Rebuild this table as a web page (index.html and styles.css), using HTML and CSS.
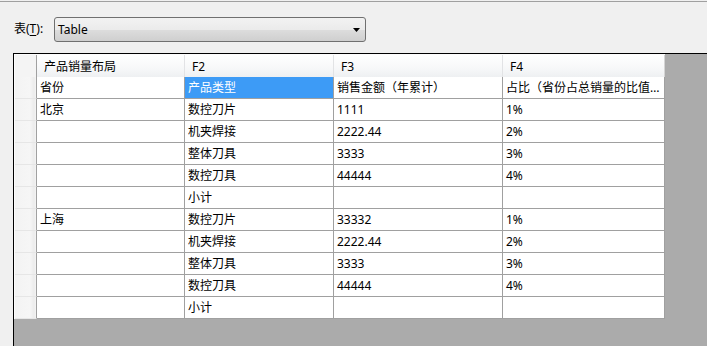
FILE: index.html
```html
<!DOCTYPE html>
<html lang="zh-CN">
<head>
<meta charset="utf-8">
<title>表</title>
<link rel="stylesheet" href="styles.css">
</head>
<body>
<div class="window">
  <div class="toolbar">
    <label class="field-label">表(<u>T</u>):</label>
    <div class="combo">
      <span class="combo-text">Table</span>
      <svg class="combo-arrow" width="7" height="4" viewBox="0 0 7 4"><polygon points="0,0 7,0 3.5,4" fill="#000"/></svg>
    </div>
  </div>
  <div class="frame">
    <div class="grid">
      <div class="corner"></div>
      <div class="col-head">产品销量布局</div>
      <div class="col-head">F2</div>
      <div class="col-head">F3</div>
      <div class="col-head last">F4</div>

      <div class="row-head"></div>
      <div class="cell">省份</div>
      <div class="cell selected">产品类型</div>
      <div class="cell">销售金额（年累计）</div>
      <div class="cell">占比（省份占总销量的比值…</div>

      <div class="row-head"></div>
      <div class="cell">北京</div>
      <div class="cell">数控刀片</div>
      <div class="cell">1111</div>
      <div class="cell">1%</div>

      <div class="row-head"></div>
      <div class="cell"></div>
      <div class="cell">机夹焊接</div>
      <div class="cell">2222.44</div>
      <div class="cell">2%</div>

      <div class="row-head"></div>
      <div class="cell"></div>
      <div class="cell">整体刀具</div>
      <div class="cell">3333</div>
      <div class="cell">3%</div>

      <div class="row-head"></div>
      <div class="cell"></div>
      <div class="cell">数控刀具</div>
      <div class="cell">44444</div>
      <div class="cell">4%</div>

      <div class="row-head"></div>
      <div class="cell"></div>
      <div class="cell">小计</div>
      <div class="cell"></div>
      <div class="cell"></div>

      <div class="row-head"></div>
      <div class="cell">上海</div>
      <div class="cell">数控刀片</div>
      <div class="cell">33332</div>
      <div class="cell">1%</div>

      <div class="row-head"></div>
      <div class="cell"></div>
      <div class="cell">机夹焊接</div>
      <div class="cell">2222.44</div>
      <div class="cell">2%</div>

      <div class="row-head"></div>
      <div class="cell"></div>
      <div class="cell">整体刀具</div>
      <div class="cell">3333</div>
      <div class="cell">3%</div>

      <div class="row-head"></div>
      <div class="cell"></div>
      <div class="cell">数控刀具</div>
      <div class="cell">44444</div>
      <div class="cell">4%</div>

      <div class="row-head"></div>
      <div class="cell"></div>
      <div class="cell">小计</div>
      <div class="cell"></div>
      <div class="cell"></div>
    </div>
  </div>
</div>
</body>
</html>
```

FILE: styles.css
```css
html, body {
  margin: 0;
  height: 100%;
  overflow: hidden;
}

body {
  background: #f0f0f0;
  font-family: "Noto Sans", "Noto Sans CJK SC", sans-serif;
  font-size: 12px;
  color: #000;
  padding-top: 1px;
  box-sizing: border-box;
}

.window {
  height: 100%;
  border-top: 1px solid #a0a0a0;
  display: flex;
  flex-direction: column;
  box-sizing: border-box;
}

/* table picker row */
.toolbar {
  display: flex;
  align-items: center;
  padding: 15px 0 11px 14px;
}

.field-label {
  width: 40px;
  line-height: 16px;
  padding-bottom: 1px;
}

.field-label u {
  text-decoration-thickness: 1px;
  text-underline-offset: 2px;
}

.combo {
  width: 312px;
  height: 25px;
  box-sizing: border-box;
  border: 1px solid #707070;
  border-radius: 3px;
  background: linear-gradient(#f2f2f2 0%, #ebebeb 50%, #dddddd 51%, #cfcfcf 100%);
  display: flex;
  align-items: center;
  justify-content: space-between;
  padding: 0 5px 0 3px;
}

.combo-text {
  line-height: 16px;
  padding-top: 1px;
}

.combo-arrow {
  display: block;
}

/* data grid */
.frame {
  flex: 1;
  margin-left: 13px;
  border-left: 1px solid #000;
  border-top: 1px solid #000;
  background: #ababab;
}

.grid {
  display: grid;
  grid-template-columns: 22px 148px 149px 169px 162px;
  grid-auto-rows: 22px;
  width: max-content;
  border-left: 1px solid #fcfcfc;
  border-top: 1px solid #fcfcfc;
}

.grid > div {
  box-sizing: border-box;
  white-space: nowrap;
  overflow: hidden;
  text-overflow: ellipsis;
  line-height: 20px;
  padding-top: 1px;
}

.corner,
.col-head {
  height: 23px;
  background: linear-gradient(#ffffff 0%, #f7f8f9 60%, #eef0f2 100%);
  border-bottom: 1px solid #a0a0a0;
}

.corner {
  background: #f4f4f4;
  border-right: 1px solid #a0a0a0;
}

.col-head {
  border-right: 1px solid #e2e3e5;
  padding: 2px 0 0 7px;
}

.grid > .col-head {
  padding-top: 2px;
}

.col-head.last {
  border-right: 1px solid #d5d5d5;
}

.row-head {
  background: linear-gradient(90deg, #f3f3f3 0%, #f6f6f6 70%, #ececec 90%, #f4f4f4 100%);
  border-bottom: 1px solid #e6e6e6;
  border-right: 1px solid #a0a0a0;
}

.cell {
  background: #fff;
  border-right: 1px solid #a0a0a0;
  border-bottom: 1px solid #a0a0a0;
  padding-left: 3px;
}

.cell.selected {
  background: #3d9bf6;
  color: #fff;
}
```
